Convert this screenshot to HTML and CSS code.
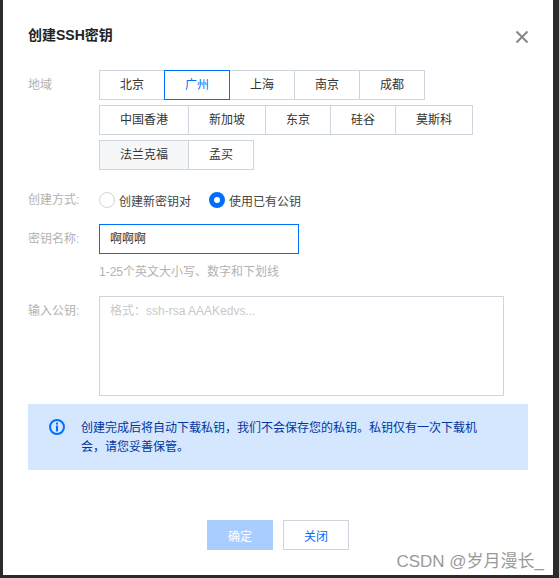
FILE: index.html
```html
<!DOCTYPE html>
<html lang="zh-CN">
<head>
<meta charset="utf-8">
<title>创建SSH密钥</title>
<link rel="stylesheet" href="styles.css">
</head>
<body>
<div class="dialog">
  <header class="head">
    <h1 class="title">创建SSH密钥</h1>
    <button class="close" aria-label="关闭">
      <svg width="14" height="14" viewBox="0 0 14 14"><path d="M1.5 1.5l11 11M12.5 1.5l-11 11" stroke="#888" stroke-width="2" fill="none"/></svg>
    </button>
  </header>
  <div class="row row-region">
    <div class="label">地域</div>
    <div class="regions">
      <div class="group">
        <span class="opt w66">北京</span><span class="opt w66 active">广州</span><span class="opt w66">上海</span><span class="opt w66">南京</span><span class="opt w66">成都</span>
      </div>
      <div class="group">
        <span class="opt w90">中国香港</span><span class="opt w78">新加坡</span><span class="opt w66">东京</span><span class="opt w66">硅谷</span><span class="opt w78">莫斯科</span>
      </div>
      <div class="group">
        <span class="opt w90 soft">法兰克福</span><span class="opt w66">孟买</span>
      </div>
    </div>
  </div>
  <div class="row row-method">
    <div class="label">创建方式:</div>
    <div class="radios">
      <span class="radio"><i class="dot"></i>创建新密钥对</span>
      <span class="radio"><i class="dot on"></i>使用已有公钥</span>
    </div>
  </div>
  <div class="row row-name">
    <div class="label">密钥名称:</div>
    <div>
      <div class="input">啊啊啊</div>
      <div class="hint">1-25个英文大小写、数字和下划线</div>
    </div>
  </div>
  <div class="row row-key">
    <div class="label">输入公钥:</div>
    <div class="textarea">格式：ssh-rsa AAAKedvs...</div>
  </div>
  <div class="notice">
    <svg class="info" width="16" height="16" viewBox="0 0 16 16"><circle cx="8" cy="8" r="7" fill="none" stroke="#006eff" stroke-width="2"/><rect x="7" y="3.6" width="2" height="2" fill="#006eff"/><rect x="7" y="6.6" width="2" height="5.8" fill="#006eff"/></svg>
    <p class="notice-text">创建完成后将自动下载私钥，我们不会保存您的私钥。私钥仅有一次下载机会，请您妥善保管。</p>
  </div>
  <footer class="foot">
    <button class="btn primary">确定</button>
    <button class="btn">关闭</button>
  </footer>
  <div class="mark">CSDN @岁月漫长_</div>
</div>
</body>
</html>
```
FILE: styles.css
```css
* { box-sizing: border-box; }
html, body { margin: 0; height: 100%; }
body {
  width: 559px;
  height: 578px;
  overflow: hidden;
  background: #2b2b2b;
  padding: 0 6px 3px 3px;
  font-family: "Liberation Sans", "Noto Sans CJK SC", sans-serif;
  font-size: 12px;
  color: #333;
}
.dialog {
  position: relative;
  height: 575px;
  background: #fff;
  padding: 0 25px;
}
.head { display: flex; justify-content: space-between; align-items: center; height: 70px; padding-bottom: 2px; }
.title { margin: 0; font-size: 14px; font-weight: 700; color: #222; }
.close { border: 0; background: none; padding: 0; margin: 5px -1px 0 0; width: 14px; height: 14px; display: block; }
.close svg { display: block; }
.row { display: flex; }
.label { width: 71px; flex: none; color: #b2b2b2; line-height: 30px; }
.regions { display: flex; flex-direction: column; gap: 5px; }
.group { display: flex; }
.opt {
  height: 30px;
  line-height: 28px;
  text-align: center;
  border: 1px solid #cfd5de;
  margin-right: -1px;
  background: #fff;
  color: #333;
}
.w66 { width: 66px; }
.w78 { width: 78px; }
.w90 { width: 90px; }
.soft { background: #f6f7f9; }
.active { border-color: #006eff; color: #006eff; position: relative; z-index: 1; }
.row-method { margin-top: 15px; height: 30px; align-items: center; }
.radios { display: flex; gap: 18px; }
.radio { display: flex; align-items: center; gap: 4px; color: #444; }
.dot { width: 16px; height: 16px; border: 1px solid #cfd5de; border-radius: 50%; }
.dot.on { border: 5px solid #006eff; }
.row-name { margin-top: 9px; }
.input {
  width: 200px;
  height: 30px;
  line-height: 28px;
  border: 1px solid #006eff;
  padding-left: 10px;
  color: #333;
}
.hint { margin-top: 10px; line-height: 16px; color: #b2b2b2; }
.row-key { margin-top: 16px; }
.textarea {
  width: 405px;
  height: 100px;
  border: 1px solid #cfd5de;
  padding: 6px 10px;
  line-height: 16px;
  color: #c9c9c9;
}
.notice {
  display: flex;
  margin-top: 8px;
  width: 500px;
  height: 66px;
  background: #d5e7ff;
  padding: 15px 21px;
}
.info { flex: none; margin: 0 16px 0 0; }
.notice-text { margin: 0; width: 400px; line-height: 19px; color: #00369e; }
.foot { display: flex; justify-content: center; gap: 10px; margin-top: 50px; }
.btn {
  width: 66px;
  height: 30px;
  border: 1px solid #cfd5de;
  background: #fff;
  color: #006eff;
  font: inherit;
  padding: 0;
}
.primary { background: #a9cdff; border-color: #a9cdff; color: #fff; }
.mark {
  position: absolute;
  right: 9px;
  bottom: 3px;
  font-size: 17px;
  color: #9a9a9a;
}
```
